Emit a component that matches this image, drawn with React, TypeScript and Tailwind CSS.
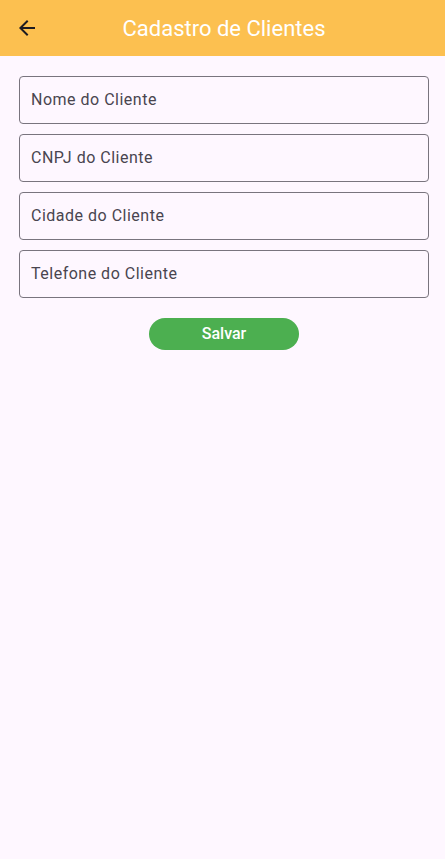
import React from "react";

const Field = ({ label }: { label: string }) => (
  <div className="h-[48px] w-full rounded-[4px] border border-[#79747e] flex items-center pl-[11px]">
    <span className="text-[16px] text-[#49454f] tracking-[0.5px]">{label}</span>
  </div>
);

export default function App() {
  return (
    <div className="w-[445px] h-[859px] bg-[#fef7ff] flex flex-col" style={{ fontFamily: "Roboto, 'Noto Sans', sans-serif" }}>
      <div className="h-[56px] bg-[#fcc050] flex items-center relative shrink-0">
        <div className="pl-[15px] flex items-center">
          <svg width="24" height="24" viewBox="0 0 24 24" fill="none">
            <path d="M20 11H7.83l5.59-5.59L12 4l-8 8 8 8 1.41-1.41L7.83 13H20v-2z" fill="#1d1b20" />
          </svg>
        </div>
        <div className="absolute inset-0 flex items-center justify-center pointer-events-none pl-[3px]">
          <span className="text-[22px] text-white">Cadastro de Clientes</span>
        </div>
      </div>
      <div className="ml-[19px] w-[410px] pt-[20px] flex flex-col gap-[10px]">
        <Field label="Nome do Cliente" />
        <Field label="CNPJ do Cliente" />
        <Field label="Cidade do Cliente" />
        <Field label="Telefone do Cliente" />
      </div>
      <div className="flex justify-center pt-[20px] pl-[3px]">
        <button className="w-[150px] h-[32px] rounded-full bg-[#4caf50] text-white text-[16px] font-medium flex items-center justify-center">
          Salvar
        </button>
      </div>
    </div>
  );
}
